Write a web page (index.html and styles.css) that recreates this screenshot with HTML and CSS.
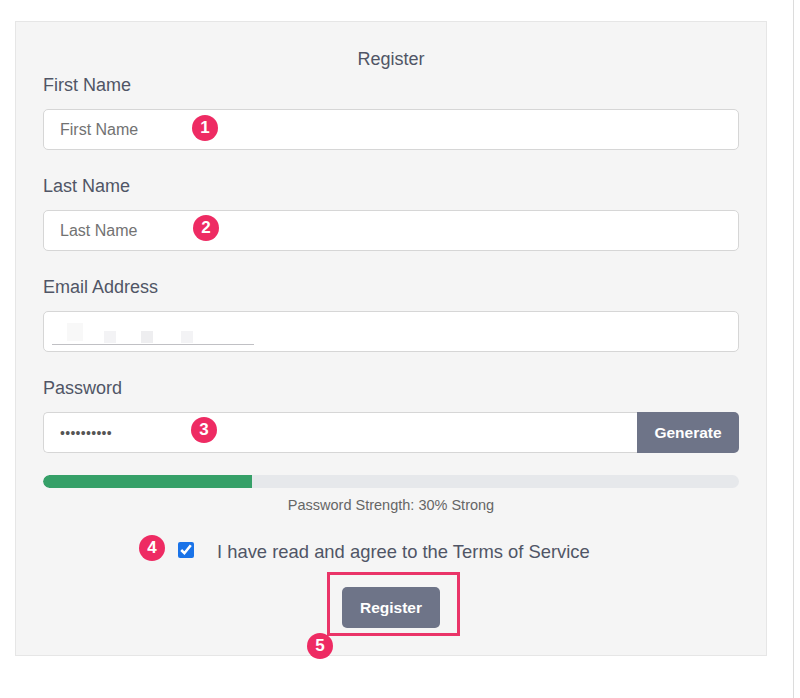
FILE: index.html
```html
<!DOCTYPE html>
<html lang="en">
<head>
    <meta charset="UTF-8">
    <meta name="viewport" content="width=device-width, initial-scale=1.0">
    <title>Register</title>
    <link rel="stylesheet" href="styles.css">
</head>
<body>
    <div class="page">
        <form class="panel" id="registerForm">
            <div class="title">Register</div>

            <div class="field">
                <label for="firstName">First Name</label>
                <div class="control">
                    <input type="text" id="firstName" placeholder="First Name">
                    <span class="badge badge-1">1</span>
                </div>
            </div>

            <div class="field">
                <label for="lastName">Last Name</label>
                <div class="control">
                    <input type="text" id="lastName" placeholder="Last Name">
                    <span class="badge badge-2">2</span>
                </div>
            </div>

            <div class="field">
                <label for="email">Email Address</label>
                <div class="control">
                    <input type="email" id="email">
                    <!-- blurred address -->
                    <div class="blur">
                        <span class="blob blob-a"></span>
                        <span class="blob blob-b"></span>
                        <span class="blob blob-c"></span>
                        <span class="blob blob-d"></span>
                        <span class="blur-line"></span>
                    </div>
                </div>
            </div>

            <div class="field field-last">
                <label for="password">Password</label>
                <div class="control group">
                    <input type="password" id="password" value="secretpass">
                    <button type="button" class="btn btn-generate">Generate</button>
                    <span class="badge badge-3">3</span>
                </div>
            </div>

            <div class="strength-bar">
                <div class="strength-fill" style="width: 30%"></div>
            </div>
            <div class="strength-text">Password Strength: 30% Strong</div>

            <div class="terms">
                <span class="badge badge-4">4</span>
                <input type="checkbox" id="terms" checked>
                <label for="terms">I have read and agree to the Terms of Service</label>
            </div>

            <div class="submit-row">
                <div class="submit-wrap">
                    <button type="submit" class="btn btn-register">Register</button>
                    <span class="highlight"></span>
                    <span class="badge badge-5">5</span>
                </div>
            </div>
        </form>
        <div class="edge"></div>
    </div>
</body>
</html>
```

FILE: styles.css
```css
body {
    margin: 0;
    font-family: "Liberation Sans", Arial, sans-serif;
    color: #505566;
    background: #fff;
}
.page {
    display: flex;
    align-items: flex-start;
    height: 698px;
    padding-top: 21px;
    padding-left: 15px;
    box-sizing: border-box;
}
.panel {
    width: 752px;
    box-sizing: border-box;
    background: #f5f5f5;
    border: 1px solid #e6e6e6;
    padding: 26px 27px 27px;
}
.edge {
    align-self: stretch;
    width: 1px;
    margin-top: -21px;
    margin-left: 26px;
    background: #dcdcdc;
}
.title {
    text-align: center;
    font-size: 18px;
    line-height: 22px;
    margin-bottom: 4px;
}
.field {
    margin-bottom: 25px;
}
.field-last {
    margin-bottom: 22px;
}
.field label {
    display: block;
    font-size: 18px;
    line-height: 22px;
    margin-bottom: 13px;
}
.control {
    position: relative;
}
.control input {
    display: block;
    width: 100%;
    height: 41px;
    box-sizing: border-box;
    border: 1.5px solid #d6d6d6;
    border-radius: 5px;
    background: #fff;
    padding: 0 16px;
    font-family: inherit;
    font-size: 16px;
    color: #333;
    outline: none;
}
.control input::placeholder {
    color: #727272;
}
.group {
    display: flex;
}
.group input {
    flex: 1;
    border-right: none;
    border-radius: 5px 0 0 5px;
    font-size: 14px;
    letter-spacing: 0.3px;
    color: #555;
}
.btn {
    border: none;
    background: #6e7488;
    color: #fff;
    font-family: inherit;
    font-weight: bold;
    font-size: 15.5px;
    cursor: pointer;
}
.btn-generate {
    width: 102px;
    height: 41px;
    border-radius: 0 5px 5px 0;
}
.btn-register {
    width: 98px;
    height: 41px;
    border-radius: 5px;
}
.blur {
    position: absolute;
    left: 0;
    top: 0;
    width: 260px;
    height: 41px;
    pointer-events: none;
}
.blob {
    position: absolute;
    top: 20px;
    height: 12px;
    background: #f3f3f5;
}
.blob-a { left: 24px; width: 16px; top: 12px; height: 18px; background: #f8f8f8; }
.blob-b { left: 61px; width: 12px; }
.blob-c { left: 98px; width: 12px; background: #eeeef0; }
.blob-d { left: 138px; width: 12px; }
.blur-line {
    position: absolute;
    left: 9px;
    top: 33px;
    width: 202px;
    height: 1px;
    background: #c0c0c4;
}
.strength-bar {
    height: 13px;
    border-radius: 7px;
    background: #e6e8eb;
    overflow: hidden;
}
.strength-fill {
    height: 100%;
    background: #36a068;
    border-radius: 7px 0 0 7px;
}
.strength-text {
    text-align: center;
    font-size: 14.5px;
    line-height: 18px;
    margin-top: 8px;
    color: #666;
}
.terms {
    position: relative;
    display: flex;
    align-items: center;
    margin-top: 27px;
    padding-left: 135px;
    height: 22px;
}
.terms input {
    width: 16px;
    height: 16px;
    margin: -4px 23px 0 0;
    accent-color: #1a73e8;
}
.terms label {
    font-size: 18.4px;
    line-height: 22px;
}
.submit-row {
    display: flex;
    justify-content: center;
    margin-top: 24px;
}
.submit-wrap {
    position: relative;
}
.highlight {
    position: absolute;
    left: -15px;
    top: -15px;
    right: -20px;
    bottom: -8px;
    border: 3px solid #ea3468;
}
.badge {
    position: absolute;
    width: 26px;
    height: 26px;
    border-radius: 50%;
    background: #ee2b63;
    color: #fff;
    font-weight: bold;
    font-size: 17px;
    line-height: 26px;
    text-align: center;
}
.badge-1 { left: 149px; top: 6px; }
.badge-2 { left: 150px; top: 5px; }
.badge-3 { left: 148px; top: 5px; }
.badge-4 { left: 96px; top: -6px; }
.badge-5 { left: -35px; top: 46px; }
```
